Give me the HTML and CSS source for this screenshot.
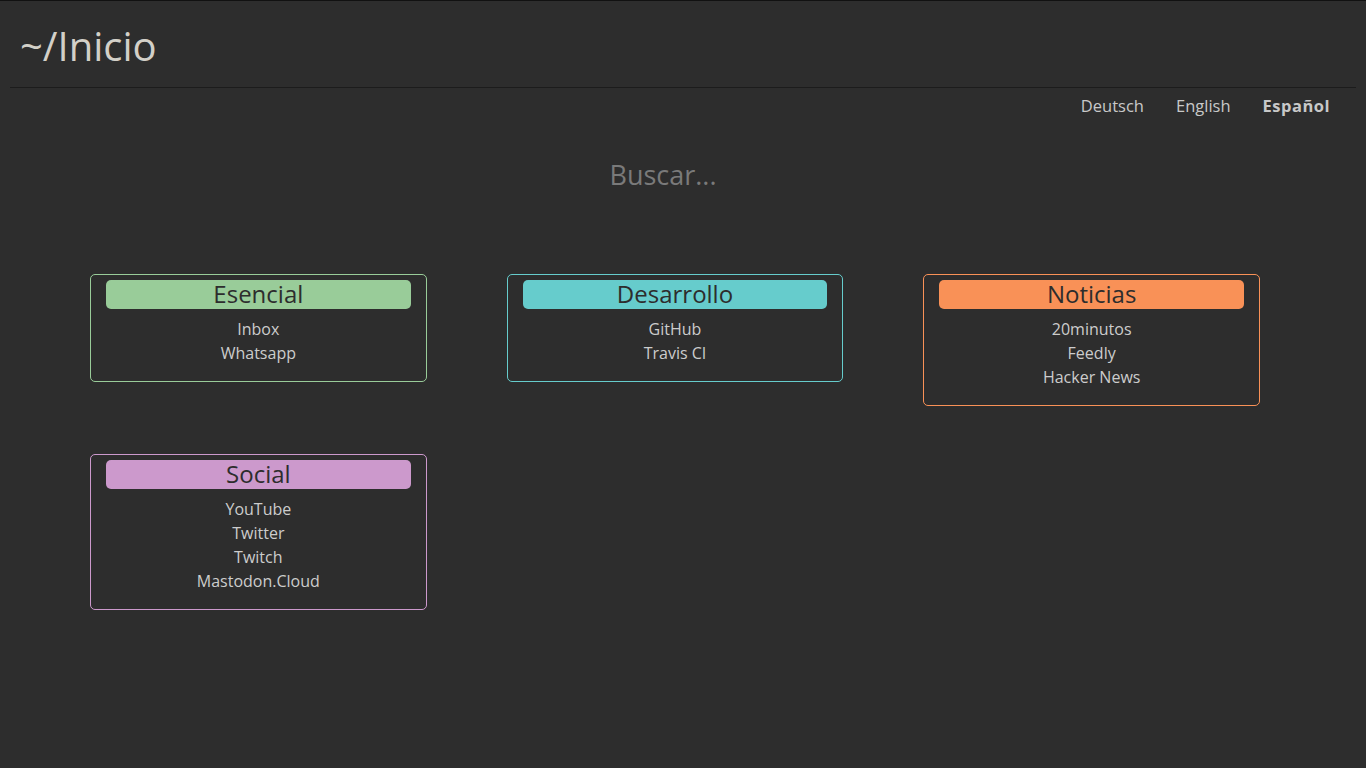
FILE: index.html
```html
<!DOCTYPE html>
<html lang="es">
<head>
<meta charset="utf-8">
<title>~/Inicio</title>
<link rel="stylesheet" href="styles.css">
</head>
<body>
<div class="page">
  <header class="top">
    <h1 class="title">~/Inicio</h1>
  </header>
  <nav class="langs">
    <a class="lang">Deutsch</a>
    <a class="lang">English</a>
    <a class="lang active">Español</a>
  </nav>
  <div class="search">
    <input class="search-input" type="text" placeholder="Buscar...">
  </div>
  <main class="grid">
    <section class="card green">
      <h2 class="card-head">Esencial</h2>
      <ul class="links">
        <li>Inbox</li>
        <li>Whatsapp</li>
      </ul>
    </section>
    <section class="card teal">
      <h2 class="card-head">Desarrollo</h2>
      <ul class="links">
        <li>GitHub</li>
        <li>Travis CI</li>
      </ul>
    </section>
    <section class="card orange">
      <h2 class="card-head">Noticias</h2>
      <ul class="links">
        <li>20minutos</li>
        <li>Feedly</li>
        <li>Hacker News</li>
      </ul>
    </section>
    <section class="card purple">
      <h2 class="card-head">Social</h2>
      <ul class="links">
        <li>YouTube</li>
        <li>Twitter</li>
        <li>Twitch</li>
        <li>Mastodon.Cloud</li>
      </ul>
    </section>
  </main>
</div>
</body>
</html>
```
FILE: styles.css
```css
html, body {
  margin: 0;
  padding: 0;
  background: #2d2d2d;
}
body {
  border-top: 1px solid #111;
  min-height: 767px;
  font-family: "Open Sans", "DejaVu Sans", sans-serif;
  color: #cccccc;
}
.page {
  margin: 0 10px;
}
.top {
  border-bottom: 1px solid #1c1c1c;
  padding: 18px 10px 14px;
}
.title {
  margin: 0;
  font-size: 40px;
  font-weight: 400;
  line-height: 54px;
  color: #d3d0c8;
}
.langs {
  display: flex;
  justify-content: flex-end;
  padding: 6px 10px 0 0;
}
.lang {
  font-size: 16.5px;
  line-height: 24px;
  padding: 0 16px;
  color: #c8c8c8;
  cursor: pointer;
}
.lang.active {
  font-weight: 700;
  letter-spacing: 0.5px;
}
.search {
  display: flex;
  justify-content: center;
  margin-top: 39px;
  padding-right: 40px;
}
.search-input {
  background: transparent;
  border: none;
  outline: none;
  text-align: center;
  font-family: "Open Sans", "DejaVu Sans", sans-serif;
  font-size: 27px;
  line-height: 36px;
  color: #cccccc;
  width: 600px;
  padding: 0;
}
.search-input::placeholder {
  color: #7a7a7a;
}
.grid {
  display: grid;
  grid-template-columns: repeat(3, 1fr);
  column-gap: 80px;
  row-gap: 48px;
  align-items: start;
  width: 1170px;
  margin: 81px 0 0 80px;
}
.card {
  border: 1px solid;
  border-radius: 5px;
  padding: 5px 15px 16px;
}
.card-head {
  margin: 0;
  border-radius: 5px;
  font-size: 24px;
  font-weight: 400;
  line-height: 27px;
  padding-bottom: 2px;
  text-align: center;
  color: #2d2d2d;
}
.links {
  list-style: none;
  margin: 8px 0 0;
  padding: 0;
  text-align: center;
  font-size: 16px;
  line-height: 24px;
  color: #cccccc;
}
.green { border-color: #99cc99; }
.green .card-head { background: #99cc99; }
.teal { border-color: #66cccc; }
.teal .card-head { background: #66cccc; }
.orange { border-color: #f99157; }
.orange .card-head { background: #f99157; }
.purple { border-color: #cc99cc; }
.purple .card-head { background: #cc99cc; }
```
